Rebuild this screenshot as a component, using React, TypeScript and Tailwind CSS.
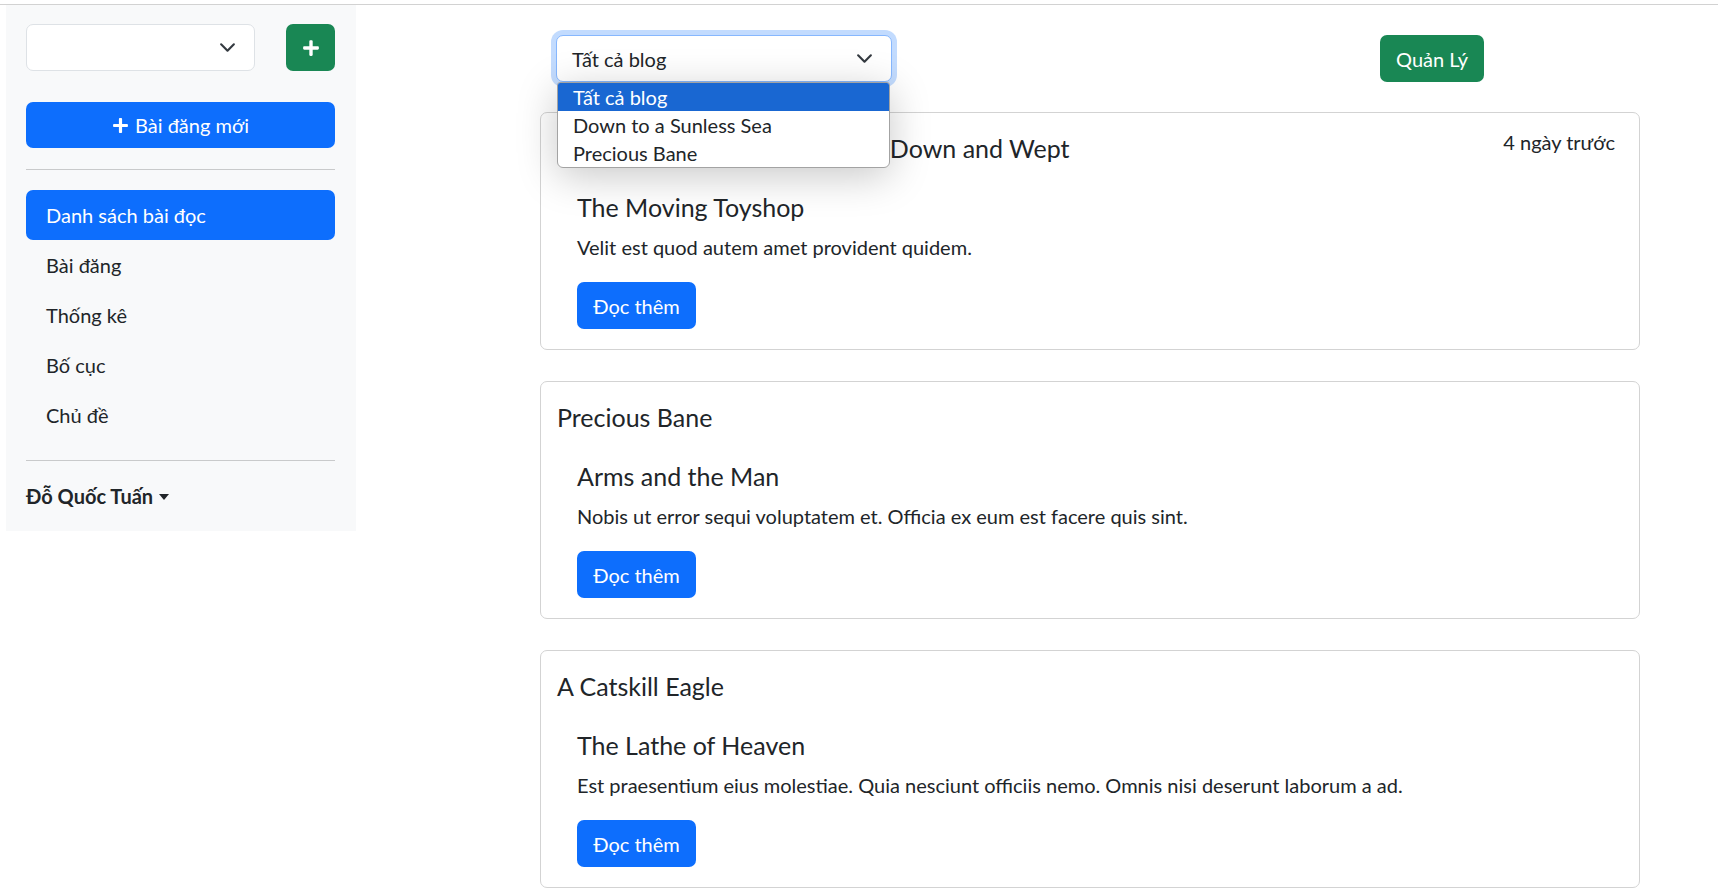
import { FaPlus } from "react-icons/fa";

const font = "font-['Lato','Noto_Sans',sans-serif]";

function Chevron() {
  return (
    <svg viewBox="0 0 16 16" className="h-[17px] w-[17px]" fill="none" stroke="#343a40" strokeWidth="2" strokeLinecap="round" strokeLinejoin="round">
      <path d="m2 5 6 6 6-6" />
    </svg>
  );
}

const posts = [
  {
    blog: "By Grand Central Station I Sat Down and Wept",
    date: "4 ngày trước",
    title: "The Moving Toyshop",
    text: "Velit est quod autem amet provident quidem.",
  },
  {
    blog: "Precious Bane",
    title: "Arms and the Man",
    text: "Nobis ut error sequi voluptatem et. Officia ex eum est facere quis sint.",
  },
  {
    blog: "A Catskill Eagle",
    title: "The Lathe of Heaven",
    text: "Est praesentium eius molestiae. Quia nesciunt officiis nemo. Omnis nisi deserunt laborum a ad.",
  },
];

const navItems = ["Danh sách bài đọc", "Bài đăng", "Thống kê", "Bố cục", "Chủ đề"];

export default function App() {
  return (
    <div className={`min-h-screen bg-white text-[20px] leading-[30px] text-[#212529] ${font}`}>
      <div className="h-[5px] border-b border-[#d2d2d2]" />
      <div className="flex items-start">
        {/* sidebar */}
        <aside className="ml-[6px] w-[350px] bg-[#f8f9fa] pb-[20px] pl-[20px] pr-[21px] pt-[19px]">
          <div className="flex items-center">
            <div className="flex h-[47px] w-[252px] items-center justify-end rounded-[7px] border border-[#dee2e6] bg-white pr-[18px]">
              <Chevron />
            </div>
            <button className="ml-[31px] flex h-[47px] w-[49px] shrink-0 items-center justify-center rounded-[7px] bg-[#198754] text-white">
              <FaPlus className="h-[18px] w-[18px]" />
            </button>
          </div>
          <button className="mt-[31px] flex h-[46px] w-full items-center justify-center gap-[6px] rounded-[7px] bg-[#0d6efd] text-white">
            <FaPlus className="h-[17px] w-[17px]" />
            Bài đăng mới
          </button>
          <hr className="mt-[21px] border-t border-[#c9cacb]" />
          <nav className="mt-[20px] flex flex-col">
            {navItems.map((item, i) => (
              <a
                key={item}
                className={
                  i === 0
                    ? "flex h-[50px] items-center rounded-[7px] bg-[#0d6efd] px-[20px] text-white"
                    : "flex h-[50px] items-center px-[20px]"
                }
              >
                {item}
              </a>
            ))}
          </nav>
          <hr className="mt-[20px] border-t border-[#c9cacb]" />
          <div className="mt-[20px] flex items-center gap-[6px] font-bold">
            Đỗ Quốc Tuấn
            <span className="mt-[2px] h-0 w-0 border-x-[5px] border-t-[6px] border-x-transparent border-t-[#212529]" />
          </div>
        </aside>

        {/* main */}
        <main className="ml-[184px] w-[1100px] pt-[30px]">
          <div className="flex items-center">
            <div className="relative ml-[16px]">
              <div className="flex h-[47px] w-[336px] items-center justify-between rounded-[7px] border border-[#86b7fe] bg-white pl-[15px] pr-[18px] shadow-[0_0_0_5px_rgba(13,110,253,0.25)]">
                <span>Tất cả blog</span>
                <Chevron />
              </div>
              <ul className="absolute left-[1px] top-[47px] z-10 w-[333px] overflow-hidden rounded-b-[6px] rounded-t-[3px] border border-[#a3a3a3] bg-white text-[20px] leading-[28px] shadow-[0_8px_40px_rgba(0,0,0,0.22)]">
                <li className="bg-[#1967d2] pl-[15px] text-white">Tất cả blog</li>
                <li className="pl-[15px]">Down to a Sunless Sea</li>
                <li className="pl-[15px]">Precious Bane</li>
              </ul>
            </div>
            <button className="ml-auto mr-[156px] h-[47px] w-[104px] rounded-[7px] bg-[#198754] text-white">
              Quản Lý
            </button>
          </div>

          <div className="mt-[30px] flex flex-col gap-[31px]">
            {posts.map((p) => (
              <div key={p.blog} className="rounded-[7px] border border-[#d3d3d3] px-[16px] pb-[20px] pt-[20px]">
                <div className="flex items-start justify-between">
                  <h5 className="text-[25px] leading-[30px]">{p.blog}</h5>
                  {p.date && <span className="mr-[8px] mt-[-6px]">{p.date}</span>}
                </div>
                <div className="mt-[29px] pl-[20px]">
                  <h5 className="text-[25px] leading-[30px]">{p.title}</h5>
                  <p className="mt-[10px]">{p.text}</p>
                  <button className="mt-[20px] h-[47px] w-[119px] rounded-[7px] bg-[#0d6efd] text-white">
                    Đọc thêm
                  </button>
                </div>
              </div>
            ))}
          </div>
        </main>
      </div>
    </div>
  );
}
